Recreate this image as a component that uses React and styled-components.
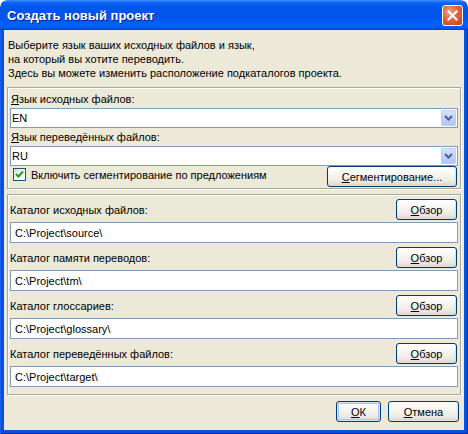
import React from 'react';
import styled, { createGlobalStyle } from 'styled-components';

const GlobalStyle = createGlobalStyle`
  html, body {
    margin: 0;
    padding: 0;
    background: #ffffff;
  }
  body {
    font-family: "Liberation Sans", Arial, sans-serif;
    font-size: 11px;
    color: #000;
  }
`;

const Window = styled.div`
  width: 468px;
  height: 434px;
  display: flex;
  flex-direction: column;
  overflow: hidden;
  border-radius: 7px 7px 0 0;
`;

const TitleBar = styled.div`
  height: 30px;
  flex: none;
  display: flex;
  align-items: center;
  justify-content: space-between;
  padding: 0 5px 0 7px;
  box-sizing: border-box;
  border-radius: 7px 7px 0 0;
  background: linear-gradient(
    to bottom,
    #3d8dfc 0%,
    #0a62f2 10%,
    #0055ea 25%,
    #0056ec 60%,
    #0061fa 85%,
    #0058ee 93%,
    #003dd6 100%
  );
`;

const Title = styled.span`
  font-family: "Liberation Sans", Arial, sans-serif;
  font-weight: bold;
  font-size: 13px;
  color: #ffffff;
  text-shadow: 1px 1px 0 #0a1e8c;
  margin-top: 1px;
`;

const CloseButton = styled.div`
  width: 21px;
  height: 21px;
  box-sizing: border-box;
  border: 1px solid #ffffff;
  border-radius: 3px;
  display: flex;
  align-items: center;
  justify-content: center;
  background: radial-gradient(circle at 35% 30%, #f1a183 0%, #e2623b 45%, #cc4014 100%);
`;

const Frame = styled.div`
  flex: 1;
  display: flex;
  padding: 0 4px 4px 4px;
  background: #0a4ee2;
  box-shadow: inset 1px 0 0 #1a5fe8, inset -1px 0 0 #0036c4, inset 0 -1px 0 #0026a8;
`;

const Client = styled.div`
  flex: 1;
  display: flex;
  flex-direction: column;
  background: #ece9d8;
  padding: 8px 3px 0 3px;
`;

const Intro = styled.div`
  padding-left: 1px;
  line-height: 14px;
`;

const Group = styled.div`
  margin-top: ${p => p.$gap}px;
  border: 1px solid #aca899;
  box-shadow: inset 1px 1px 0 #ffffff, 1px 1px 0 #ffffff;
  padding: ${p => p.$pad};
  display: flex;
  flex-direction: column;
`;

const FieldLabel = styled.div`
  height: 18px;
  line-height: 18px;
  padding-left: 1px;
`;

const Combo = styled.div`
  height: 20px;
  box-sizing: border-box;
  border: 1px solid #7f9db9;
  background: #ffffff;
  display: flex;
  align-items: center;
  justify-content: space-between;
  padding: 0 1px 0 1px;
`;

const DropButton = styled.div`
  width: 15px;
  height: 16px;
  box-sizing: border-box;
  border: 1px solid #bccef8;
  border-radius: 1px;
  background: linear-gradient(to bottom, #d6e2fd 0%, #bdcffa 60%, #b0c6f6 100%);
  display: flex;
  align-items: center;
  justify-content: center;
`;

const CheckRow = styled.div`
  height: 21px;
  display: flex;
  justify-content: space-between;
  align-items: flex-start;
`;

const CheckLabel = styled.label`
  height: 17px;
  display: flex;
  align-items: center;
  gap: 5px;
  padding-left: 3px;
`;

const CheckBox = styled.span`
  width: 13px;
  height: 13px;
  box-sizing: border-box;
  border: 1px solid #1c5180;
  background: linear-gradient(135deg, #dcdcd4 0%, #f4f4f0 50%, #ffffff 100%);
  display: flex;
  align-items: center;
  justify-content: center;
`;

const Button = styled.button`
  width: ${p => p.$w}px;
  height: 21px;
  padding: 0;
  margin: 0 ${p => p.$mr || 0}px 0 0;
  box-sizing: border-box;
  border: 1px solid #003c74;
  border-radius: 3px;
  font-family: "Liberation Sans", Arial, sans-serif;
  font-size: 11px;
  color: #000;
  background: linear-gradient(to bottom, #ffffff 0%, #f5f4ef 45%, #ecebe5 75%, #d8d3c8 100%);
  box-shadow: ${p =>
    p.$default
      ? 'inset 0 0 0 1px #cee7ff, inset 0 0 0 2px #a8c6f0'
      : 'inset -1px -1px 0 #e3ded3'};
`;

const PathRow = styled.div`
  height: 21px;
  display: flex;
  justify-content: space-between;
  align-items: center;
  margin-top: ${p => (p.$first ? 0 : 4)}px;
`;

const PathInput = styled.div`
  height: 21px;
  margin-top: 2px;
  box-sizing: border-box;
  border: 1px solid #7f9db9;
  background: #ffffff;
  padding-left: 4px;
  display: flex;
  align-items: center;
`;

const Footer = styled.div`
  display: flex;
  justify-content: flex-end;
  gap: 7px;
  margin-top: 6px;
  padding-right: 2px;
`;

const Chevron = () => (
  <svg width="9" height="6" viewBox="0 0 9 6">
    <path d="M1 1 L4.5 4.5 L8 1" fill="none" stroke="#4d6185" strokeWidth="2" />
  </svg>
);

const Check = () => (
  <svg width="9" height="9" viewBox="0 0 9 9">
    <path d="M1 4 L3.5 6.5 L8 1.5" fill="none" stroke="#21a121" strokeWidth="2" />
  </svg>
);

const Cross = () => (
  <svg width="11" height="11" viewBox="0 0 11 11">
    <path d="M1.5 1.5 L9.5 9.5 M9.5 1.5 L1.5 9.5" stroke="#ffffff" strokeWidth="2.2" strokeLinecap="square" />
  </svg>
);

const folders = [
  { label: 'Каталог исходных файлов:', path: 'C:\\Project\\source\\' },
  { label: 'Каталог памяти переводов:', path: 'C:\\Project\\tm\\' },
  { label: 'Каталог глоссариев:', path: 'C:\\Project\\glossary\\' },
  { label: 'Каталог переведённых файлов:', path: 'C:\\Project\\target\\' },
];

export default function App() {
  return (
    <>
      <GlobalStyle />
      <Window>
        <TitleBar>
          <Title>Создать новый проект</Title>
          <CloseButton>
            <Cross />
          </CloseButton>
        </TitleBar>
        <Frame>
          <Client>
            <Intro>
              Выберите язык ваших исходных файлов и язык,
              <br />
              на который вы хотите переводить.
              <br />
              Здесь вы можете изменить расположение подкаталогов проекта.
            </Intro>

            <Group $gap={7} $pad="2px 2px 1px 2px">
              <FieldLabel><u>Я</u>зык исходных файлов:</FieldLabel>
              <Combo>
                EN
                <DropButton><Chevron /></DropButton>
              </Combo>
              <FieldLabel><u>Я</u>зык переведённых файлов:</FieldLabel>
              <Combo>
                RU
                <DropButton><Chevron /></DropButton>
              </Combo>
              <CheckRow>
                <CheckLabel>
                  <CheckBox><Check /></CheckBox>
                  Включить сегментирование по предложениям
                </CheckLabel>
                <Button $w={130} $mr={1}><u>С</u>егментирование...</Button>
              </CheckRow>
            </Group>

            <Group $gap={5} $pad="4px 2px 7px 2px">
              {folders.map((f, i) => (
                <React.Fragment key={f.label}>
                  <PathRow $first={i === 0}>
                    <span>{f.label}</span>
                    <Button $w={61} $mr={1}><u>О</u>бзор</Button>
                  </PathRow>
                  <PathInput>{f.path}</PathInput>
                </React.Fragment>
              ))}
            </Group>

            <Footer>
              <Button $w={45} $default><u>О</u>К</Button>
              <Button $w={71}><u>О</u>тмена</Button>
            </Footer>
          </Client>
        </Frame>
      </Window>
    </>
  );
}
